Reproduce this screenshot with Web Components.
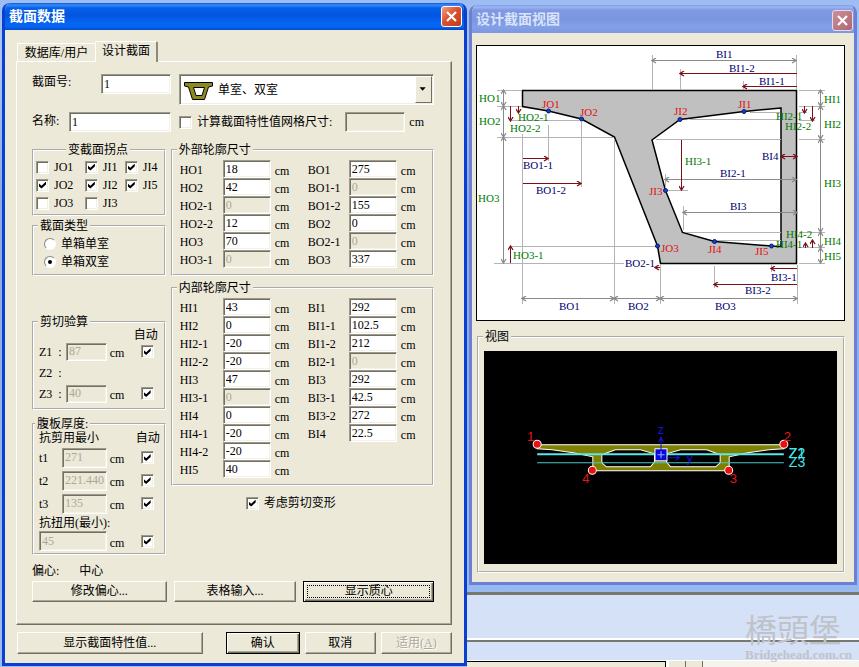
<!DOCTYPE html>
<html lang="zh-CN">
<head>
<meta charset="utf-8">
<title>截面数据</title>
<style>
  html, body { margin: 0; height: 100%; }
  body {
    --face: #ece9d8; --shade: #aca899; --dark: #716f64;
    font: 12px/14px "Liberation Serif", "Noto Sans CJK SC", serif;
    color: #000; overflow: hidden;
  }
</style>
</head>
<body>
<desk-top>
  <app-window slot="main" heading="截面数据" active>
    <tab-panel>
      <section-form></section-form>
    </tab-panel>
    <dialog-actions></dialog-actions>
  </app-window>
  <app-window slot="side" heading="设计截面视图">
    <section-diagram></section-diagram>
    <group-box legend="视图" class="view"><section-view></section-view></group-box>
  </app-window>
  <status-area slot="foot"></status-area>
</desk-top>

<script>
const define = (name, render) => customElements.define(name, class extends HTMLElement {
  connectedCallback() {
    if (this.shadowRoot) return;
    const root = this.attachShadow({ mode: 'open' });
    const t = document.createElement('template');
    t.innerHTML = render(this);
    root.append(t.content.cloneNode(true));
  }
});
const attr = (el, n, d = '') => el.getAttribute(n) ?? d;

const textBox = `
  input[type=text] {
    box-sizing: border-box; width: 100%; min-width: 0; height: var(--h, 18px); margin: 0; padding: 0 2px;
    border: 1px solid; border-color: #9d9a8c #fff #fff #9d9a8c; border-radius: 0;
    box-shadow: inset 1px 1px #716f64, inset -1px -1px #f4f2e8;
    background: #fff; color: #000; font: inherit; outline: 0;
  }
  input[type=text]:disabled { background: var(--face); color: #aca899; }`;

const tick = `
  input[type=checkbox] {
    appearance: none; box-sizing: border-box; flex: none; width: 13px; height: 13px; margin: 0;
    border: 1px solid; border-color: #9d9a8c #fff #fff #9d9a8c;
    box-shadow: inset 1px 1px #716f64, inset -1px -1px #f1efe2; background: #fff; display: grid; place-items: center;
  }
  input[type=checkbox]:checked::before {
    content: ""; width: 7px; height: 7px; background: #000;
    clip-path: polygon(0 28%, 36% 62%, 100% 0, 100% 42%, 36% 100%, 0 70%);
  }`;

define('desk-top', () => `
  <style>
    :host { display: grid; box-sizing: border-box; height: 100vh; grid-template-columns: 467fr 392fr; grid-template-rows: auto 1fr;
      background: linear-gradient(#9dbdf2, #a9c6f6 60px, #8aa9e6 200px, #9cbcf3); overflow: hidden; }
    .main { grid-row: 1 / 3; padding: 3px 0 0 2px; }
    .side { padding: 5px 2px 7px; }
    .foot { min-height: 0; }
  </style>
  <div class="main"><slot name="main"></slot></div>
  <div class="side"><slot name="side"></slot></div>
  <div class="foot"><slot name="foot"></slot></div>`);

define('app-window', el => `
  <style>
    :host { display: flex; flex-direction: column; box-sizing: border-box; border-radius: 8px 8px 0 0; overflow: hidden;
      border: 3px solid #6b7fd4; border-top: 0; background: var(--face); }
    :host([active]) { border-color: #0b3fd0; }
    header { display: flex; align-items: center; justify-content: space-between; height: 28px; padding: 2px 2px 0 5px;
      box-sizing: border-box; margin: 0 -1px;
      background: linear-gradient(#7f9be4, #9db7f5 2px, #8099e2 5px, #7b96e1 14px, #83a0e8 22px, #7d97e0); color: #d9e3f9; }
    :host([active]) header { height: 27px; padding: 0 3px 0 5px;
      background: linear-gradient(#0958d8, #3a8bf8 2px, #0660e8 5px, #0355dd 12px, #0566f5 21px, #0463f0 24px, #0349c8); color: #fff; }
    h1 { margin: 0; font-size: 14px; line-height: 20px; font-weight: 700; }
    button { width: 21px; height: 21px; padding: 0; display: grid; place-items: center; border: 1px solid #e6dbe9; border-radius: 3px;
      background: linear-gradient(135deg, #c88f9b, #b26672); }
    :host([active]) button { border-color: #fff; background: linear-gradient(135deg, #f0a088, #dc5030 45%, #c23c18); }
    .client { padding: 12px 9px 9px 4px; }
    :host([active]) .client { padding: 11px 12px 9px 11px; }
    ::slotted(.view) { margin: 10px 0 0 1px; }
  </style>
  <header><h1>${attr(el, 'heading')}</h1>
    <button type="button" aria-label="关闭"><svg width="13" height="13" viewBox="0 0 13 13"><path d="M2 2l9 9M11 2l-9 9" stroke="#fff" stroke-width="2.2"/></svg></button>
  </header>
  <div class="client"><slot></slot></div>`);

define('tab-panel', () => `
  <style>
    :host { display: block; }
    nav { display: flex; align-items: flex-end; height: 20px; margin-left: 1px; }
    button { margin: 0; padding: 0; font: inherit; background: var(--face); border: 1px solid #fff; border-bottom: 0; border-radius: 2px 2px 0 0; }
    .off { width: 78px; height: 18px; border-right: 0; }
    .on { width: 63px; height: 21px; margin-bottom: -1px; padding-bottom: 3px; position: relative; border-right: 2px solid #8d8a7c; }
    .body { border: 1px solid; border-color: #fff #716f64 #716f64 #fff; box-shadow: inset -1px -1px var(--shade); padding: 12px 17px 22px 15px; }
  </style>
  <nav role="tablist"><button class="off" role="tab" aria-selected="false">数据库/用户</button><button class="on" role="tab" aria-selected="true">设计截面</button></nav>
  <div class="body" role="tabpanel"><slot></slot></div>`);

define('group-box', el => `
  <style>
    :host { display: block; }
    fieldset { min-width: 0; margin: 0; padding: 0; border: 2px groove #fff; }
    legend { margin-left: var(--lg, 4px); padding: 0 2px; line-height: 12px; }
    :host(.view) .in { padding: 8px 6px 7px 5px; }
  </style>
  <fieldset><legend>${attr(el, 'legend')}</legend><div class="in"><slot></slot></div></fieldset>`);

define('value-row', el => `
  <style>
    :host { display: grid; grid-template-columns: var(--label, 43px) 48px 1fr; align-items: center; height: 18px; }
    label { padding-top: 2px; } span { padding: 4px 0 0 4px; }
    ${textBox}
  </style>
  <label for="v">${attr(el, 'label')}</label>
  <input id="v" type="text" value="${attr(el, 'value')}" ${el.hasAttribute('off') ? 'disabled' : ''}><span>cm</span>`);

define('auto-row', el => `
  <style>
    :host { display: grid; grid-template-columns: var(--label, 23px) 1fr 34px 13px; align-items: center; height: var(--row, 23px); }
    span { padding: 3px 0 0 3px; }
    ${textBox}${tick}
  </style>
  <label for="v">${attr(el, 'label')}</label>
  ${el.hasAttribute('value') ? `<input id="v" type="text" disabled value="${attr(el, 'value')}" aria-label="${attr(el, 'name', attr(el, 'label'))}"><span>cm</span>
  <input type="checkbox" checked aria-label="自动">` : ''}`);

define('tick-box', el => `
  <style>
    :host { display: block; }
    label { display: flex; align-items: center; gap: 5px; white-space: nowrap; }
    ${tick}
  </style>
  <label><input type="checkbox" ${el.hasAttribute('on') ? 'checked' : ''}><slot></slot></label>`);

define('radio-list', el => `
  <style>
    :host { display: block; padding: 3px 0 3px 10px; }
    label { display: flex; align-items: center; gap: 5px; height: 18px; }
    input { appearance: none; box-sizing: border-box; width: 12px; height: 12px; margin: 0; border-radius: 50%; border: 1px solid;
      border-color: #8b887b #fff #fff #8b887b; background: #fff; display: grid; place-items: center; }
    input:checked::before { content: ""; width: 4px; height: 4px; border-radius: 50%; background: #000; }
  </style>
  ${attr(el, 'items').split(',').map((t, i) => `<label><input type="radio" name="type" ${i == attr(el, 'pick') ? 'checked' : ''}>${t}</label>`).join('')}`);

define('push-button', el => `
  <style>
    :host { display: block; }
    button { display: block; box-sizing: border-box; width: 100%; height: var(--h, 21px); margin: 0; padding: 0 0 1px; font: inherit; color: #000;
      background: var(--face); border: 1px solid; border-radius: 0; border-color: #fff #716f64 #716f64 #fff; box-shadow: inset -1px -1px var(--shade); }
    :host([primary]) button { border-color: #000; box-shadow: inset 1px 1px #fff, inset -1px -1px #716f64, inset -2px -2px var(--shade); }
    :host([dotted]) button { outline: 1px dotted #000; outline-offset: -5px; }
    button:disabled { color: #aca899; text-shadow: 1px 1px #fff; }
  </style>
  <button type="button" ${el.hasAttribute('off') ? 'disabled' : ''}><slot></slot></button>`);

define('shape-select', () => `
  <style>
    :host { display: block; position: relative; }
    select { appearance: none; box-sizing: border-box; width: 100%; height: 31px; margin: 0; padding: 0 24px 0 38px; border-radius: 0;
      border: 1px solid; border-color: #9d9a8c #fff #fff #9d9a8c; box-shadow: inset 1px 1px #716f64, inset -1px -1px #f1efe2;
      background: #fff; color: #000; font: inherit; }
    svg { position: absolute; pointer-events: none; }
    .shape { left: 5px; top: 8px; }
    .drop { right: 2px; top: 2px; box-sizing: border-box; background: var(--face); border: 1px solid; border-color: #fff #716f64 #716f64 #fff; }
  </style>
  <select aria-label="截面形状"><option>单室、双室</option></select>
  <svg class="shape" width="29" height="18" viewBox="0 0 29 18"><path fill-rule="evenodd" d="M.5.5h28v3.500l-4 1-4 12.500h-12l-4-12.500-4-1zM9.500 5.500l2.500 8h6l2.500-8z" fill="#8c8a1c" stroke="#000"/></svg>
  <svg class="drop" width="17" height="27" viewBox="0 0 17 27"><path d="M4 11h7l-3.500 4z"/></svg>`);

const rows = list => list.map(([l, v, off]) => `<value-row label="${l}" value="${v}" ${off ? 'off' : ''}></value-row>`).join('');
define('section-form', () => `
  <style>
    :host { display: block; }
    .top { display: grid; grid-template-columns: 139fr 255fr; gap: 7px 8px; }
    .top > div { display: flex; }
    .top label { flex: none; white-space: nowrap; padding-top: 2px; }
    .top .id label { width: 69px; padding-top: 1px; } .top .nm label { width: 37px; }
    .id, .nm, .mesh { --h: 20px; }
    .id input, .nm input { flex: 1; }
    .mesh { align-items: center; } .mesh input { flex: 0 0 60px !important; width: 60px !important; margin: 0 4px 0 13px !important; }
    ${textBox}
    .cols { display: grid; grid-template-columns: 134fr 264fr; gap: 5px; margin-top: 12px; }
    .ticks { display: grid; grid-template-columns: 49fr 40fr 39fr; padding: 2px 0 2px 2px; align-items: center; grid-auto-rows: 18px; }
    .type { margin-top: 4px; } .shear { margin-top: 40px; } .web { margin-top: 8px; --lg: 1px; }
    .knots { --lg: 32px; }
    .head { display: flex; justify-content: space-between; margin-right: -6px; }
    .shear .in { padding: 0 10px 4px 5px; --label: 27px; --row: 21px; }
    .shear .head { justify-content: flex-end; height: 13px; margin-right: -4px; }
    .web .in { padding: 0 10px 2px 5px; --h: 20px; }
    .web .head, .tor { height: 16px; line-height: 16px; }
    .last { --label: 0px; --row: 20px; }
    .sizes { display: grid; grid-template-columns: 128fr 124fr; padding: 4px 0 6px 7px; }
    .sizes > div + div { --label: 41px; }
    .inner { margin-top: 6px; }
    .deform { margin: 10px 0 0 75px; }
    .ecc { display: flex; gap: 20px; margin-top: 8px; line-height: 16px; }
    .acts { display: grid; grid-template-columns: 135fr 123fr 131fr; gap: 7px; margin-top: 2px; }
  </style>
  <div class="top">
    <div class="id"><label for="no">截面号:</label><input id="no" type="text" value="1"></div>
    <shape-select></shape-select>
    <div class="nm"><label for="nm">名称:</label><input id="nm" type="text" value="1"></div>
    <div class="mesh"><tick-box>计算截面特性值网格尺寸:</tick-box><input type="text" disabled aria-label="网格尺寸"><span>cm</span></div>
  </div>
  <div class="cols">
    <div>
      <group-box class="knots" legend="变截面拐点"><div class="ticks">
        <tick-box>JO1</tick-box><tick-box on>JI1</tick-box><tick-box on>JI4</tick-box>
        <tick-box on>JO2</tick-box><tick-box on>JI2</tick-box><tick-box on>JI5</tick-box>
        <tick-box>JO3</tick-box><tick-box>JI3</tick-box></div></group-box>
      <group-box class="type" legend="截面类型"><radio-list items="单箱单室,单箱双室" pick="1"></radio-list></group-box>
      <group-box class="shear" legend="剪切验算"><div class="in">
        <div class="head">自动</div>
        <auto-row label="Z1 &nbsp;:" value="87"></auto-row><auto-row label="Z2 &nbsp;:"></auto-row><auto-row label="Z3 &nbsp;:" value="40"></auto-row></div></group-box>
      <group-box class="web" legend="腹板厚度:"><div class="in">
        <div class="head"><span>抗剪用最小</span><span>自动</span></div>
        <auto-row label="t1" value="271"></auto-row><auto-row label="t2" value="221.440"></auto-row><auto-row label="t3" value="135"></auto-row>
        <div class="tor">抗扭用(最小):</div>
        <auto-row class="last" name="抗扭用(最小)" value="45"></auto-row></div></group-box>
    </div>
    <div>
      <group-box legend="外部轮廓尺寸"><div class="sizes">
        <div>${rows([['HO1', 18], ['HO2', 42], ['HO2-1', 0, 1], ['HO2-2', 12], ['HO3', 70], ['HO3-1', 0, 1]])}</div>
        <div>${rows([['BO1', 275], ['BO1-1', 0, 1], ['BO1-2', 155], ['BO2', 0], ['BO2-1', 0, 1], ['BO3', 337]])}</div></div></group-box>
      <group-box class="inner" legend="内部轮廓尺寸"><div class="sizes">
        <div>${rows([['HI1', 43], ['HI2', 0], ['HI2-1', -20], ['HI2-2', -20], ['HI3', 47], ['HI3-1', 0, 1], ['HI4', 0], ['HI4-1', -20], ['HI4-2', -20], ['HI5', 40]])}</div>
        <div>${rows([['BI1', 292], ['BI1-1', 102.5], ['BI1-2', 212], ['BI2-1', 0, 1], ['BI3', 292], ['BI3-1', 42.5], ['BI3-2', 272], ['BI4', 22.5]])}</div></div></group-box>
      <tick-box class="deform" on>考虑剪切变形</tick-box>
    </div>
  </div>
  <div class="ecc"><span>偏心:</span><span>中心</span></div>
  <div class="acts"><push-button>修改偏心...</push-button><push-button>表格输入...</push-button><push-button primary dotted>显示质心</push-button></div>`);

define('dialog-actions', () => `
  <style>
    :host { display: grid; grid-template-columns: 188fr 16px 72fr 72fr 72fr; gap: 5px; margin: 7px 0 0 1px; --h: 22px; }
    .wide { grid-column: 1 / 2; } .ok { grid-column: 3 / 4; margin-left: -3px; }
  </style>
  <push-button class="wide">显示截面特性值...</push-button><push-button class="ok" primary>确认</push-button>
  <push-button>取消</push-button><push-button off>适用(<u>A</u>)</push-button>`);

/* Dimensioned drawing of the half box girder. */
const ends = { g: '#8a8a8a', r: '#7a1018' };
const dim = (c, x1, y1, x2, y2, both) =>
  `<path d="M${x1} ${y1}L${x2} ${y2}" stroke="${ends[c]}" marker-end="url(#${c})" ${both ? `marker-start="url(#${c})"` : ''}/>`;
const label = (c, list) => `<g fill="${c}">${list.map(([t, x, y]) => `<text x="${x}" y="${y}">${t}</text>`).join('')}</g>`;
define('section-diagram', () => `
  <style>
    :host { display: block; border: 1px solid #000; background: #fff; }
    svg { display: block; width: 100%; height: auto; font-size: 11px; }
  </style>
  <svg viewBox="477 46 367 274" fill="none" role="img" aria-label="设计截面尺寸示意">
    <defs>${Object.entries(ends).map(([id, c]) => `<marker id="${id}" viewBox="0 0 6 6" refX="5" refY="3" markerWidth="6" markerHeight="6" orient="auto-start-reverse"><path d="M1 .5L5 3L1 5.500" fill="none" stroke="${c}" stroke-width="1.300"/></marker>`).join('')}</defs>
    <path fill="#c0c0c0" stroke="#000" stroke-width="1.500" fill-rule="evenodd" d="M522.500 90.500H796.500V263.500H660.500L657.500 246L614.500 137L581.500 119L548.500 111L522.500 106.500ZM781 108L744 111.500L680 119.500L652 140L665.500 190.500L682.500 232.500L714.500 241.500L771.500 246L781 246.500Z"/>
    <path stroke="#b4b4b4" d="M497 90.500h25M497 106.500h25M497 137.500h117M511 246.500h146M494 263.500h130M511 120.500h68M522.500 134V304M548.500 125V161M581.500 122V187M614.500 139V304M660.500 265V304M797.500 265V304M652.500 55V90M680.500 69V90M743.500 81V90M796.500 55V90M799 90.500h26M799 106.500h26M656 139.500h125M799 139.500h26M686 232.500h95M799 232.500h26M716 240.500h65M799 247.500h26M799 263.500h26M666 190.500h22M665.500 174V190M683.500 206V230M714.500 266V288M771.500 265V272M690 119.500h90M750 112.500h30M799 112.500h8M799 120.500h16"/>
    ${[[503.5, 90, 503.5, 106], [503.5, 106, 503.5, 137], [503.5, 137, 503.5, 263], [522, 298.5, 614, 298.5], [614, 298.5, 660, 298.5], [660, 298.5, 797, 298.5], [652, 60.5, 796, 60.5], [820.5, 90, 820.5, 106], [820.5, 106, 820.5, 139], [820.5, 139, 820.5, 232], [820.5, 232, 820.5, 248], [820.5, 248, 820.5, 263], [665, 179.5, 796, 179.5], [683, 212.5, 797, 212.5]].map(a => dim('g', ...a, 1)).join('')}
    ${[[523, 158.5, 548, 158.5], [523, 183.5, 581, 183.5], [510.5, 106, 510.5, 121], [518.5, 106, 518.5, 113], [510.5, 263, 510.5, 246], [660, 267.5, 655, 267.5], [797, 73.5, 680, 73.5], [797, 86.5, 743, 86.5], [804.5, 106, 804.5, 113], [812.5, 106, 812.5, 121], [805.5, 248, 805.5, 243], [812.5, 248, 812.5, 240], [681.5, 140, 681.5, 190], [797, 268.5, 771, 268.5], [797, 284.5, 714, 284.5]].map(a => dim('r', ...a)).join('')}
    ${dim('r', 781, 156.5, 797, 156.5, 1)}
    <g fill="#1440d0" stroke="#001a70">${[[548.5, 111], [581.5, 119], [657.5, 246], [744, 111.5], [680, 119.5], [665.5, 190.5], [714.5, 241.5], [771.5, 246]].map(([x, y]) => `<circle cx="${x}" cy="${y}" r="2"/>`).join('')}</g>
    ${label('#007a00', [['HO1', 479, 102], ['HO2', 479, 125], ['HO2-1', 518, 121], ['HO2-2', 510, 132], ['HO3', 478, 202], ['HO3-1', 513, 259], ['HI1', 824, 103], ['HI2', 824, 128], ['HI2-1', 776, 120], ['HI2-2', 785, 130], ['HI3-1', 685, 165], ['HI3', 824, 187], ['HI4-2', 786, 238], ['HI4-1', 776, 248], ['HI4', 824, 245], ['HI5', 824, 260]])}
    ${label('#e01010', [['JO1', 542, 108], ['JO2', 580, 116], ['JO3', 661, 252], ['JI1', 738, 108], ['JI2', 674, 115], ['JI3', 649, 195], ['JI4', 708, 253], ['JI5', 755, 255]])}
    ${label('#000070', [['BO1-1', 523, 169], ['BO1-2', 536, 194], ['BO2-1', 625, 267], ['BO1', 559, 310], ['BO2', 628, 310], ['BO3', 715, 310], ['BI1', 716, 58], ['BI1-2', 729, 72], ['BI1-1', 759, 85], ['BI4', 762, 160], ['BI2-1', 720, 177], ['BI3', 730, 210], ['BI3-1', 771, 281], ['BI3-2', 745, 294]])}
  </svg>`);

/* Full cross-section with corner points, axes and shear check lines. */
define('section-view', () => `
  <style>
    :host { display: block; background: #000; }
    svg { display: block; width: 100%; height: auto; font: 13px "Liberation Sans", sans-serif; }
  </style>
  <svg viewBox="484 351 352 212" fill="none" role="img" aria-label="截面视图">
    <path fill="#808000" stroke="#fff" fill-rule="evenodd" d="M537 444.500H783V448.500L768 449.500L747 452.500L728.500 456.500V470.500H592.500V456.500L573 452.500L552 449.500L537 448.500ZM601.500 454.500L615 449.500H640L654 453.500V461.500L650 466.500H606L601.500 462.500ZM719.500 454.500L706 449.500H680L666 453.500V461.500L670 466.500H715L719.500 462.500Z"/>
    <path stroke="#5ce6e6" stroke-width="2" d="M537 454H783"/><path stroke="#4cc8c8" d="M537 462.500H783"/>
    <rect x="654.500" y="448.500" width="12" height="12" fill="#0a0ae0" stroke="#fff"/>
    <path stroke="#1414d0" d="M660.500 437V450M658 442l2.500-5 2.500 5M667 457.500h12M675 455l4 2.500-4 2.500"/>
    <path stroke="#9ab0ff" d="M657 454.500h7M660.500 451v7"/>
    <g fill="#e81010" stroke="#fff"><circle cx="537" cy="444" r="4"/><circle cx="783" cy="444" r="4"/><circle cx="728" cy="470" r="4"/><circle cx="592" cy="470" r="4"/></g>
    ${label('#e01818', [[1, 527, 441], [2, 783, 441], [3, 729, 483], [4, 582, 483]])}
    ${label('#1414d0', [['z', 657, 434], ['y', 686, 462]])}
    <g font-size="14">${label('#40e8e8', [['Z1', 788, 458], ['Z2', 788, 458], ['Z3', 788, 467]])}</g>
  </svg>`);

define('status-area', () => `
  <style>
    :host { display: flex; flex-direction: column; height: 100%; position: relative; overflow: hidden; background: #d5e1f7; }
    .bar { height: 48px; border-top: 3px solid #77786f; box-sizing: border-box; border-bottom: 2px solid #fff; }
    .mid { height: 21px; box-sizing: border-box; border-top: 2px solid #77786f; border-bottom: 1px solid #fff; }
    .low { flex: 1; display: grid; grid-template-columns: 199fr 3fr 17fr 17fr 156fr; background: #fff; }
    .low i { background: var(--face); border-top: 1px solid #000; border-right: 1px solid #000; }
    .low b { background: var(--face); border-right: 1px solid #716f64; }
    .low u { background: #f5f3ec; }
    .mark { position: absolute; right: 7px; bottom: 6px; color: #bfc3c9; }
    .mark p { margin: 0 0 4px; font: 32px/32px "Noto Sans CJK TC", sans-serif; }
    .mark small { display: block; font-size: 13px; line-height: 13px; font-weight: 700; }
  </style>
  <div class="bar"></div><div class="mid"></div>
  <div class="low"><i></i><span></span><b></b><b></b><u></u></div>
  <div class="mark"><p>橋頭堡</p><small>Bridgehead.com.cn</small></div>`);
</script>
</body>
</html>
